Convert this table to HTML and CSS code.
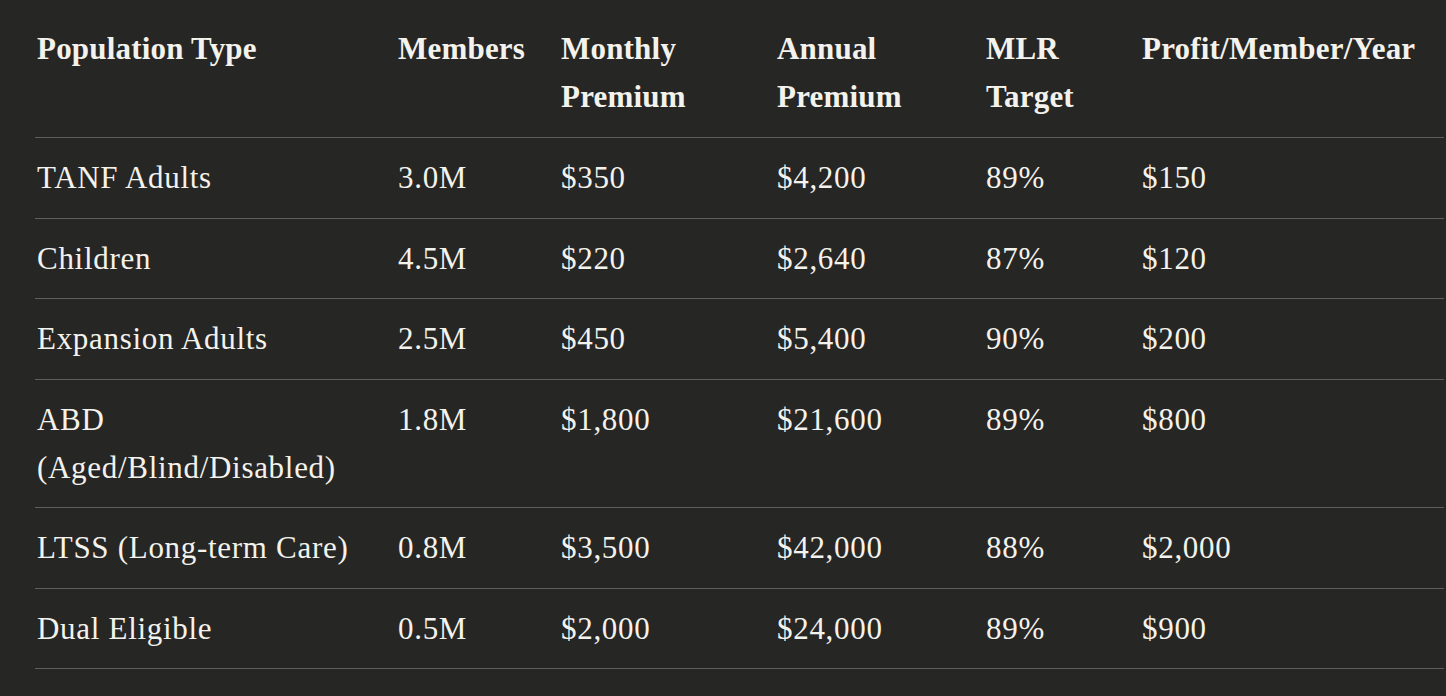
FILE: index.html
```html
<!DOCTYPE html>
<html lang="en">
<head>
<meta charset="utf-8">
<title>Population Types</title>
<link rel="stylesheet" href="styles.css">
</head>
<body>
<div class="wrap">
<table class="data">
  <colgroup>
    <col class="c1"><col class="c2"><col class="c3"><col class="c4"><col class="c5"><col class="c6">
  </colgroup>
  <thead>
    <tr><th>Population Type</th><th>Members</th><th>Monthly Premium</th><th>Annual Premium</th><th>MLR Target</th><th>Profit/Member/Year</th></tr>
  </thead>
  <tbody>
    <tr><td>TANF Adults</td><td>3.0M</td><td>$350</td><td>$4,200</td><td>89%</td><td>$150</td></tr>
    <tr><td>Children</td><td>4.5M</td><td>$220</td><td>$2,640</td><td>87%</td><td>$120</td></tr>
    <tr><td>Expansion Adults</td><td>2.5M</td><td>$450</td><td>$5,400</td><td>90%</td><td>$200</td></tr>
    <tr><td>ABD (Aged/Blind/Disabled)</td><td>1.8M</td><td>$1,800</td><td>$21,600</td><td>89%</td><td>$800</td></tr>
    <tr><td>LTSS (Long-term Care)</td><td>0.8M</td><td>$3,500</td><td>$42,000</td><td>88%</td><td>$2,000</td></tr>
    <tr><td>Dual Eligible</td><td>0.5M</td><td>$2,000</td><td>$24,000</td><td>89%</td><td>$900</td></tr>
  </tbody>
</table>
</div>
</body>
</html>
```
FILE: styles.css
```css
html, body {
  margin: 0;
  padding: 0;
  background: #262624;
}
body {
  color: #f4f2ec;
  font-family: "Liberation Serif", "DejaVu Serif", serif;
  overflow: hidden;
}
.wrap {
  padding: 9px 0 0 35px;
}
.data {
  border-collapse: collapse;
  table-layout: fixed;
  width: 1409px;
  font-size: 31px;
  line-height: 48px;
}
.c1 { width: 361px; }
.c2 { width: 163px; }
.c3 { width: 216px; }
.c4 { width: 209px; }
.c5 { width: 156px; }
.c6 { width: auto; }
.data th,
.data td {
  text-align: left;
  vertical-align: top;
  padding: 16px 12px 15.5px 2px;
  border-bottom: 1px solid #5f5e5a;
}
.data th {
  font-weight: 700;
  letter-spacing: 0.2px;
  padding-bottom: 16px;
}
.data td {
  font-weight: 400;
  letter-spacing: 0.7px;
}
```
